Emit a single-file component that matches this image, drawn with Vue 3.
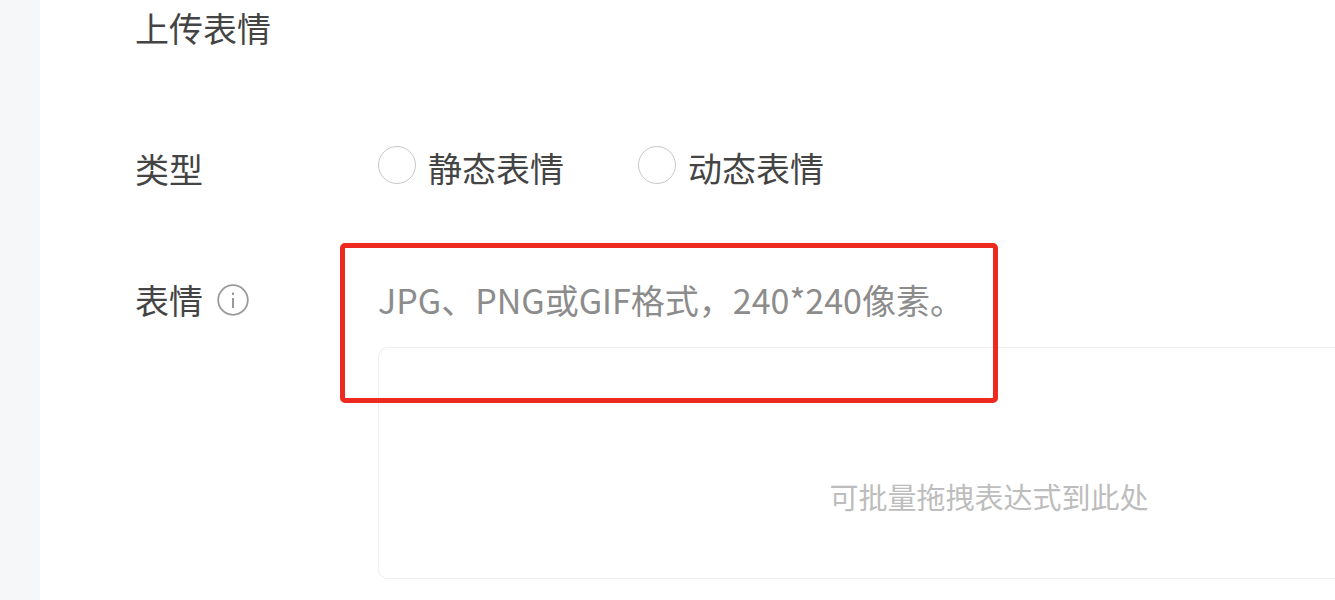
<script setup>
const types = ['静态表情', '动态表情'];
</script>

<template>
    <div class="page">
        <aside class="gutter"></aside>
        <main class="panel">
            <h1 class="panel-title">上传表情</h1>

            <div class="form-row type-row">
                <span class="form-label">类型</span>
                <div class="radio-group">
                    <label v-for="type in types" :key="type" class="radio-item">
                        <span class="radio-dot"></span>
                        <span>{{ type }}</span>
                    </label>
                </div>
            </div>

            <div class="form-row sticker-row">
                <span class="form-label">
                    表情
                    <svg class="info-icon" viewBox="0 0 32 32" fill="none">
                        <circle cx="16" cy="16" r="14.8" stroke="#999" stroke-width="1.8" />
                        <path d="M16 14v10" stroke="#999" stroke-width="2" />
                        <path d="M16 8.5v2.6" stroke="#999" stroke-width="2" />
                    </svg>
                </span>
                <div class="form-field">
                    <p class="hint">JPG、PNG或GIF格式，240*240像素。</p>
                    <div class="dropzone">可批量拖拽表达式到此处</div>
                    <div class="highlight"></div>
                </div>
            </div>
        </main>
    </div>
</template>

<style>
html,body{margin:0;background:#fff;overflow:hidden}
</style>

<style scoped>
.page{display:flex;width:1335px;height:600px;overflow:hidden;background:#fff;font-family:"Noto Sans CJK SC","Noto Sans",sans-serif}
.gutter{flex:0 0 40px;background:#f5f7f9}
.panel{flex:1;min-width:0;padding:0 0 0 95px}
.panel-title{margin:0;padding-top:4px;height:48px;color:#444;font-size:34px;font-weight:400;line-height:48px}
.form-row{display:flex}
.type-row{margin-top:93px;align-items:center}
.sticker-row{margin-top:83px}
.form-label{flex:0 0 243px;display:flex;align-items:center;gap:14px;height:48px;color:#444;font-size:34px;line-height:48px}
.radio-group{display:flex;gap:74px;margin-top:-2px}
.radio-item{display:flex;align-items:center;gap:12px;color:#444;font-size:34px;line-height:48px}
.radio-dot{width:38px;height:38px;margin-bottom:6px;border:1.5px solid #c8c8c8;border-radius:50%;box-sizing:border-box}
.info-icon{width:32px;height:32px}
.form-field{position:relative;flex:0 0 1222px}
.hint{margin:0;height:48px;color:#8c8c8c;font-size:34px;line-height:48px;white-space:nowrap}
.dropzone{display:flex;align-items:center;justify-content:center;box-sizing:border-box;height:232px;margin-top:23px;padding-top:66px;border:1.5px solid #eee;border-radius:10px;color:#bdbdbd;font-size:29px}
.highlight{position:absolute;left:-38px;top:-33px;width:658px;height:160px;box-sizing:border-box;border:5px solid #ee2a20;border-radius:5px}
</style>
